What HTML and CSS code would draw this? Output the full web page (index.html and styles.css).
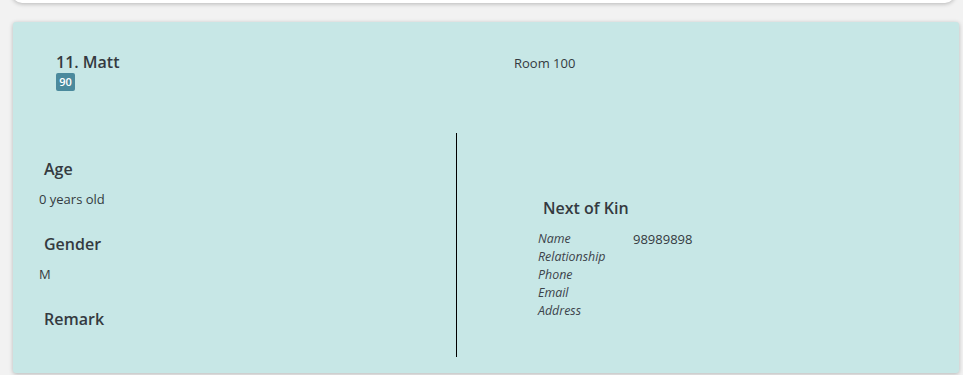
FILE: index.html
```html
<!DOCTYPE html>
<html lang="en">
<head>
<meta charset="utf-8">
<title>Resident</title>
<link rel="stylesheet" href="styles.css">
</head>
<body>
<div class="top-card"></div>
<div class="card">
  <div class="card-head">
    <div class="title-block">
      <div class="title">11. Matt</div>
      <span class="badge">90</span>
    </div>
    <div class="room">Room 100</div>
  </div>
  <div class="details">
    <div class="left-col">
      <div class="field">
        <h4>Age</h4>
        <p>0 years old</p>
      </div>
      <div class="field">
        <h4>Gender</h4>
        <p>M</p>
      </div>
      <div class="field">
        <h4>Remark</h4>
        <p></p>
      </div>
    </div>
    <div class="divider"></div>
    <div class="right-col">
      <h4>Next of Kin</h4>
      <div class="kin">
        <span class="lbl">Name</span><span class="val">98989898</span>
        <span class="lbl">Relationship</span><span class="val"></span>
        <span class="lbl">Phone</span><span class="val"></span>
        <span class="lbl">Email</span><span class="val"></span>
        <span class="lbl">Address</span><span class="val"></span>
      </div>
    </div>
  </div>
</div>
</body>
</html>
```
FILE: styles.css
```css
html, body {
  margin: 0;
  padding: 0;
}
body {
  background: #f2f2f2;
  font-family: "Open Sans", "Liberation Sans", sans-serif;
  color: #343a40;
  width: 963px;
  height: 375px;
  overflow: hidden;
}
.top-card {
  height: 40px;
  margin: -37px 8px 0 12px;
  background: #fff;
  border-radius: 10px;
  box-shadow: 0 1px 4px rgba(0, 0, 0, 0.25);
}
.card {
  margin: 19px 4px 0 13px;
  height: 351px;
  background: #c7e7e6;
  border-radius: 3px;
  box-shadow: 0 1px 4px rgba(0, 0, 0, 0.25);
  box-sizing: border-box;
  padding-top: 30px;
}
.card-head {
  display: grid;
  grid-template-columns: 501px 1fr;
  height: 81px;
}
.title-block {
  padding-left: 43px;
}
.title {
  font-size: 16px;
  font-weight: 600;
  line-height: 20px;
}
.badge {
  display: block;
  width: 19px;
  text-align: center;
  margin-top: 1px;
  background: #4b8a9d;
  color: #fff;
  font-size: 11px;
  font-weight: 600;
  line-height: 18px;
  border-radius: 2px;
}
.room {
  font-size: 13px;
  line-height: 20px;
  padding-top: 1px;
}
.details {
  display: grid;
  grid-template-columns: 443px 1px 1fr;
  grid-template-rows: 224px;
  height: 224px;
}
.divider {
  background: #000;
}
.left-col {
  padding: 24px 0 0 26px;
}
.field {
  height: 75px;
}
.field:last-child {
  height: 30px;
}
h4 {
  margin: 0;
  font-size: 16px;
  font-weight: 600;
  line-height: 24px;
  padding-left: 5px;
}
.field p {
  margin: 9px 0 0;
  font-size: 13px;
  line-height: 18px;
}
.right-col {
  padding: 63px 0 0 81px;
}
.kin {
  margin-top: 10px;
  display: grid;
  grid-template-columns: 95px 1fr;
  font-size: 12.4px;
  line-height: 18px;
}
.lbl {
  font-style: italic;
  color: #3c434a;
}
.val {
  font-size: 13px;
}
```
